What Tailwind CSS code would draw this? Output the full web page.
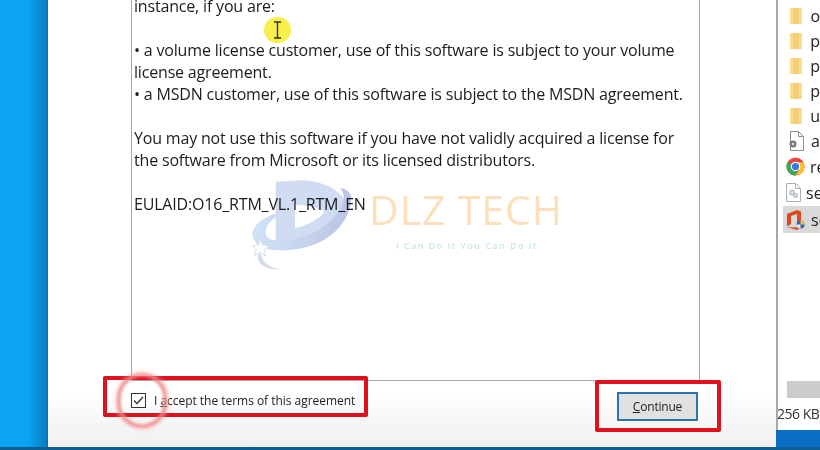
<!DOCTYPE html>
<html lang="en">
<head>
    <meta charset="UTF-8">
    <title>License agreement</title>
    <script src="https://cdn.jsdelivr.net/npm/@tailwindcss/browser@4"></script>
</head>
<body class="w-[820px] h-[450px] overflow-hidden relative bg-[#0a6fc4] font-['Open_Sans',sans-serif] text-[#1a1a1a]">

    <!-- desktop wallpaper on the left -->
    <div class="absolute left-0 top-0 w-[47px] h-[450px] bg-gradient-to-r from-[#0aa4f2] from-[60%] to-[#0b7cc0]"></div>
    <div class="absolute left-0 top-[447px] w-[820px] h-[3px] bg-[#0f5f96]"></div>

    <!-- explorer window behind -->
    <div class="absolute left-[776px] top-0 w-[44px] h-[430px] bg-white border-l-2 border-[#a8a8a8] flex flex-col text-[16px] text-[#222] overflow-hidden">
        <div class="flex flex-col pt-[3px] pl-[8px]">
            <div class="h-[25px] flex items-center gap-[5px]"><span class="w-[22px] flex justify-center"><svg class="blur-[0.4px]" width="12" height="16" viewBox="0 0 12 16"><path d="M0 0h12v16H0z" fill="#f9dc8e"/><path d="M3 0h6v16H3z" fill="#f6cf72"/></svg></span><span>o</span></div>
            <div class="h-[25px] flex items-center gap-[5px]"><span class="w-[22px] flex justify-center"><svg class="blur-[0.4px]" width="12" height="16" viewBox="0 0 12 16"><path d="M0 0h12v16H0z" fill="#f9dc8e"/><path d="M3 0h6v16H3z" fill="#f6cf72"/></svg></span><span>p</span></div>
            <div class="h-[25px] flex items-center gap-[5px]"><span class="w-[22px] flex justify-center"><svg class="blur-[0.4px]" width="12" height="16" viewBox="0 0 12 16"><path d="M0 0h12v16H0z" fill="#f9dc8e"/><path d="M3 0h6v16H3z" fill="#f6cf72"/></svg></span><span>p</span></div>
            <div class="h-[25px] flex items-center gap-[5px]"><span class="w-[22px] flex justify-center"><svg class="blur-[0.4px]" width="12" height="16" viewBox="0 0 12 16"><path d="M0 0h12v16H0z" fill="#f9dc8e"/><path d="M3 0h6v16H3z" fill="#f6cf72"/></svg></span><span>p</span></div>
            <div class="h-[25px] flex items-center gap-[5px]"><span class="w-[22px] flex justify-center"><svg class="blur-[0.4px]" width="12" height="16" viewBox="0 0 12 16"><path d="M0 0h12v16H0z" fill="#f9dc8e"/><path d="M3 0h6v16H3z" fill="#f6cf72"/></svg></span><span>u</span></div>
            <div class="h-[26px] flex items-center gap-[5px]"><span class="w-[22px] flex justify-center"><svg class="blur-[0.3px]" width="17" height="20" viewBox="0 0 17 20"><path d="M2.500.5h8l5 5v14h-13z" fill="#fff" stroke="#8f8f8f"/><path d="M10.500.5v5h5" fill="none" stroke="#8f8f8f"/><circle cx="5" cy="13" r="3.500" fill="#777"/><circle cx="5" cy="13" r="1.300" fill="#ddd"/></svg></span><span>a</span></div>
            <div class="h-[25px] flex items-center gap-[5px]"><span class="w-[22px] flex justify-center"><svg width="19" height="19" viewBox="0 0 20 20"><circle cx="10" cy="10" r="9.500" fill="#e8453c"/><path d="M10 10 1.800 5.200A9.500 9.500 0 0 0 10 19.500l4-8z" fill="#3aa757"/><path d="M10 5.500h8.400A9.500 9.500 0 0 1 10 19.500l4-6z" fill="#fbc02d"/><circle cx="10" cy="10" r="5" fill="#fff"/><circle cx="10" cy="10" r="3.800" fill="#3b78e7"/></svg></span><span>re</span></div>
            <div class="h-[27px] flex items-center gap-[5px]"><span class="w-[22px] flex justify-center"><svg class="blur-[0.3px]" width="15" height="19" viewBox="0 0 15 19"><path d="M.5.500h9l5 5v13H.5z" fill="#fff" stroke="#b0b0b0"/><path d="M9.500.5v5h5" fill="none" stroke="#b0b0b0"/><circle cx="6" cy="9.500" r="2.500" fill="#d5dce4" stroke="#a9b4c0"/><circle cx="9.500" cy="12.500" r="2" fill="#d5dce4" stroke="#a9b4c0"/></svg></span><span>se</span></div>
        </div>
        <div class="ml-[5px] h-[27px] bg-[#d9d9d9] flex items-center gap-[5px] pl-[3px]">
            <span class="w-[22px] flex justify-center">
                <svg width="20" height="20" viewBox="0 0 20 20"><path d="M1 4 11 0l4 1.500V17l-4 3-10-3 10 .5V4L5 6v8l-4 2.500z" fill="#e0481c"/><circle cx="14.500" cy="14.500" r="4" fill="#3a63a8"/><path d="M14.500 10.500a4 4 0 0 1 4 4h-4z" fill="#f2c230"/><path d="M10.500 14.500h4v4a4 4 0 0 1-4-4z" fill="#e9e9e9"/></svg>
            </span>
            <span>se</span>
        </div>
        <!-- scrollbar and file size at the bottom -->
        <div class="mt-[148px] ml-[9px] h-[17px] bg-[#cccccc]"></div>
        <div class="mt-[6px] -ml-[1px] h-[19px] text-[14px] leading-[19px] text-[#333] whitespace-nowrap tracking-[-0.5px]">256 KB</div>
    </div>

    <!-- installer dialog -->
    <div class="absolute left-[47px] top-0 w-[729px] h-[447px] bg-gradient-to-b from-white from-[88%] to-[#f0f0f0] border-l border-[#0e6c9e] flex flex-col pl-[83px] pr-[76px]">
        <div class="h-[381px] border-l border-r border-b border-[#a6a6a6] overflow-hidden">
            <div class="-mt-[5px] pl-[2px] text-[16px] leading-[22px] tracking-[-0.18px] whitespace-nowrap text-[#1c1c1c]">
                <p>instance, if you are:</p>
                <p class="h-[22px]"></p>
                <p>• a volume license customer, use of this software is subject to your volume</p>
                <p>license agreement.</p>
                <p>• a MSDN customer, use of this software is subject to the MSDN agreement.</p>
                <p class="h-[22px]"></p>
                <p>You may not use this software if you have not validly acquired a license for</p>
                <p>the software from Microsoft or its licensed distributors.</p>
                <p class="h-[22px]"></p>
                <p>EULAID:O16_RTM_VL.1_RTM_EN</p>
            </div>
        </div>
        <div class="flex items-start justify-between">
            <label class="mt-[11px] flex items-center gap-[8px] text-[12px] leading-[15px] tracking-[-0.03px] text-[#222] whitespace-nowrap">
                <span class="w-[15px] h-[15px] border border-[#333] bg-white flex items-center justify-center">
                    <svg width="11" height="9" viewBox="0 0 11 9"><path d="M1 4.500 4 7.500 10 1" fill="none" stroke="#333" stroke-width="1.300"/></svg>
                </span>
                <span class="pt-[1px]">I <span class="underline">a</span>ccept the terms of this agreement</span>
            </label>
            <div class="mt-[11px] mr-[2px] w-[81px] h-[29px] border-2 border-[#2a77ad] bg-[#e1e1e1] flex items-center justify-center text-[12px] tracking-[-0.2px] text-[#222]"><span><span class="underline">C</span>ontinue</span></div>
        </div>
    </div>

    <!-- watermark -->
    <svg class="absolute left-[245px] top-[175px] mix-blend-multiply blur-[0.4px]" width="125" height="100" viewBox="0 0 375 300">
        <defs>
            <linearGradient id="swoosh" x1="0" x2="1" y1="0" y2="0">
                <stop offset="0" stop-color="#cfe4f7"/>
                <stop offset="1" stop-color="#bcc3e4"/>
            </linearGradient>
        </defs>
        <path fill-rule="evenodd" d="M92 20 170 16C240 18 290 50 305 85 315 120 270 170 205 195L148 205 92 215ZM150 90V160C190 150 225 130 238 110 220 98 185 90 150 90Z" fill="#d0dcf1"/>
        <path d="M92 115C50 130 20 155 22 180 25 210 60 225 100 226 150 228 220 215 265 175 295 150 315 110 318 80 322 60 315 45 285 38 305 60 300 95 260 135 225 168 165 195 120 198 85 200 60 190 62 170 64 150 78 135 92 128Z" fill="url(#swoosh)"/>
        <path d="M46 190 53 210 74 212 58 224 62 243 46 232 28 241 34 224 22 212 40 210Z" fill="#fff" stroke="#d3deeb" stroke-width="3"/>
        <path d="M40 236C30 262 60 287 108 283 76 280 52 262 47 236Z" fill="#d3dbe8"/>
    </svg>
    <div class="absolute left-[369px] top-[187px] text-[41px] leading-[44px] font-medium tracking-[0.9px] text-[#fbe0bb] whitespace-nowrap">DLZ TECH</div>
    <div class="absolute left-[396px] top-[239px] text-[9px] leading-[14px] font-semibold tracking-[1.45px] text-[#c5ecd3] whitespace-nowrap">I Can Do It You Can Do It</div>

    <!-- tutorial annotations -->
    <div class="absolute left-[264px] top-[17px] w-[27px] h-[26px] rounded-full bg-[#f8ee4c] blur-[0.5px] flex items-center justify-center">
        <svg width="9" height="18" viewBox="0 0 9 18"><path d="M1 1h7M4.500 1v16M1 17h7" fill="none" stroke="#333" stroke-width="1.400"/></svg>
    </div>
    <div class="absolute left-[103px] top-[376px] w-[265px] h-[41px] border-4 border-[#e0101c] rounded-[2px]"></div>
    <div class="absolute left-[595px] top-[380px] w-[126px] h-[52px] border-4 border-[#e0101c] rounded-[2px]"></div>
    <div class="absolute left-[117px] top-[373px] w-[50px] h-[55px] rounded-full border-[4px] border-[#f08a8a]/80 blur-[1px] shadow-[0_0_5px_#f4a0a0]"></div>
</body>
</html>
